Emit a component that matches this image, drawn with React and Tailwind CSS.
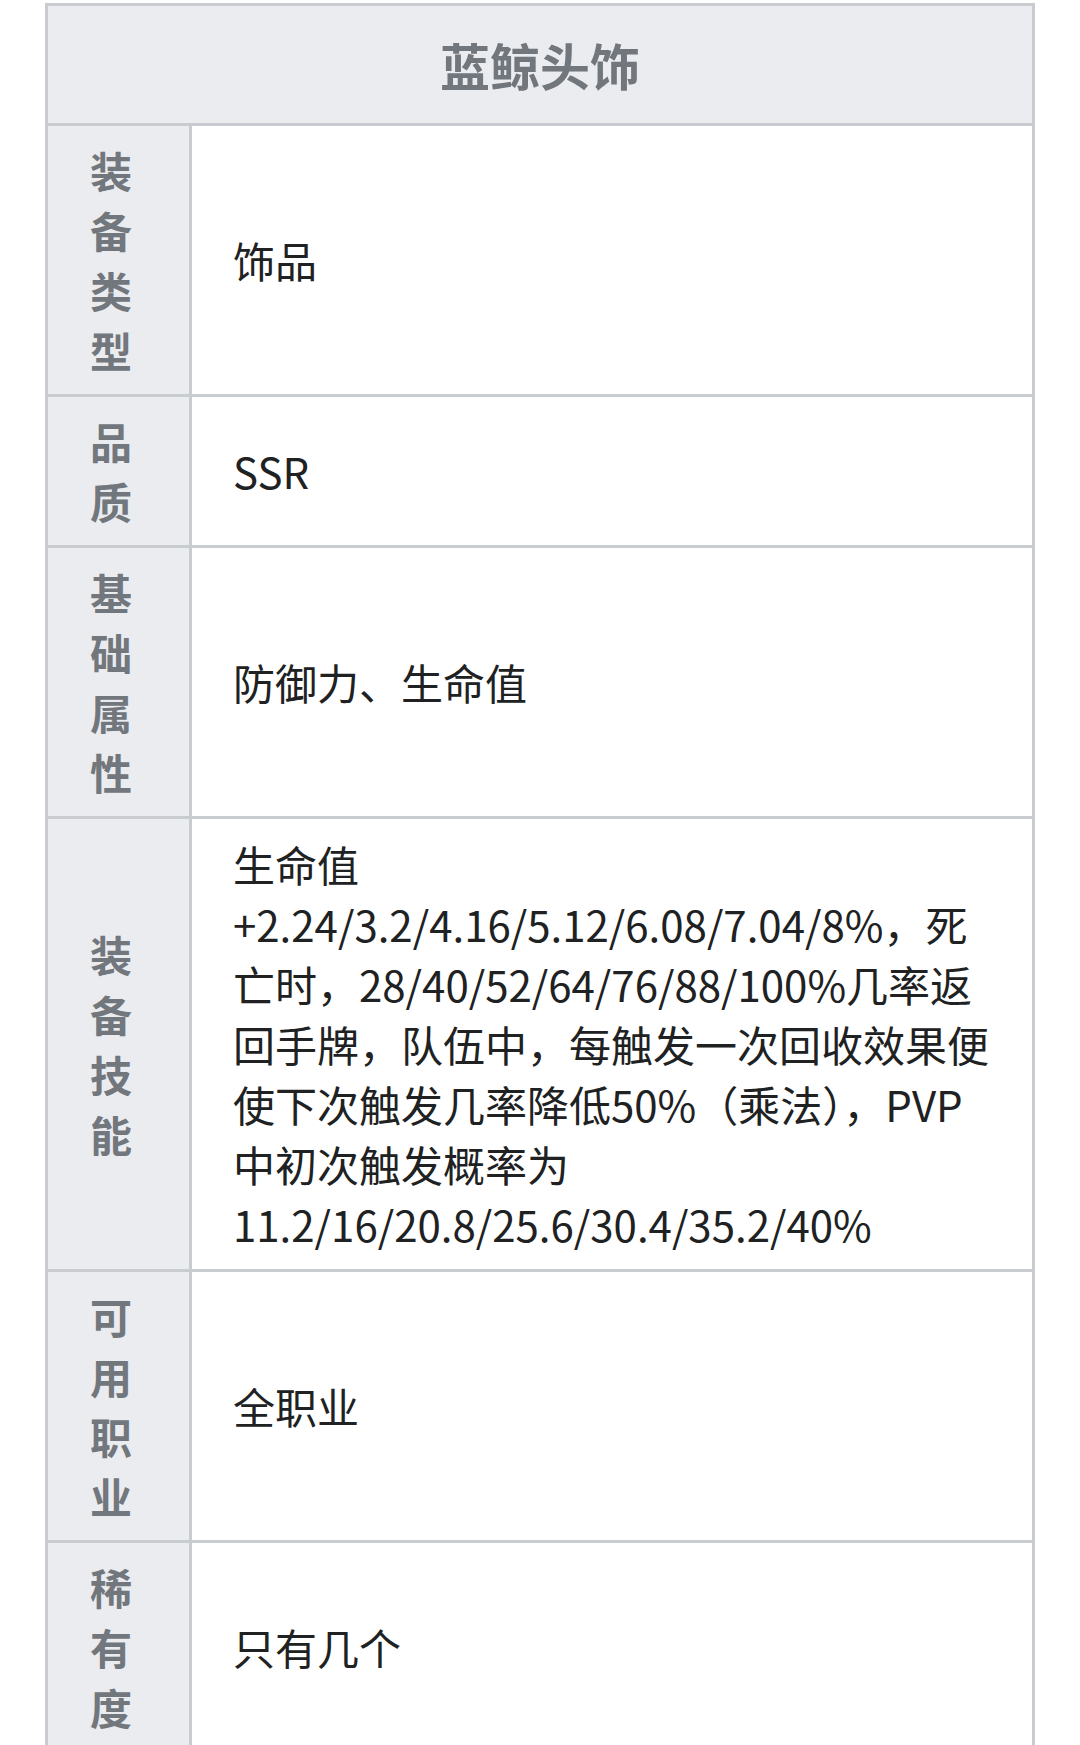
import React from 'react';

const rows = [
  { label: '装备类型', value: '饰品' },
  { label: '品质', value: 'SSR' },
  { label: '基础属性', value: '防御力、生命值' },
  {
    label: '装备技能',
    value:
      '生命值+2.24/3.2/4.16/5.12/6.08/7.04/8%，死亡时，28/40/52/64/76/88/100%几率返回手牌，队伍中，每触发一次回收效果便使下次触发几率降低50%（乘法），PVP中初次触发概率为11.2/16/20.8/25.6/30.4/35.2/40%',
    tall: true,
  },
  { label: '可用职业', value: '全职业' },
  { label: '稀有度', value: '只有几个' },
];

const App = () => {
  return (
    <div
      className="min-h-[1745px] bg-white px-[45px] pt-[3px]"
      style={{ fontFamily: '"Noto Sans CJK SC", "Noto Sans", sans-serif' }}
    >
      <table className="w-full border-collapse border-[3px] border-[#c8ccd1]">
        <thead>
          <tr>
            <th
              colSpan={2}
              className="h-[120px] border-[3px] border-[#c8ccd1] bg-[#eaecf0] text-center text-[50px] font-bold text-[#72777d]"
            >
              蓝鲸头饰
            </th>
          </tr>
        </thead>
        <tbody>
          {rows.map((row) => (
            <tr key={row.label}>
              {/* label column, one char per line */}
              <td className="border-[3px] border-[#c8ccd1] bg-[#eaecf0] py-[14px] pl-[42px] pr-[53px] align-middle">
                <div className="w-[46px] break-all text-[42px] font-bold leading-[60px] text-[#72777d]">
                  {row.label}
                </div>
              </td>
              <td
                className={`w-full border-[3px] border-[#c8ccd1] pl-[41px] pr-[42px] align-middle text-[42px] leading-[60px] text-[#202122] ${
                  row.tall ? 'py-[15px]' : 'py-[14px]'
                }`}
              >
                {row.value}
              </td>
            </tr>
          ))}
        </tbody>
      </table>
    </div>
  );
};

export default App;
